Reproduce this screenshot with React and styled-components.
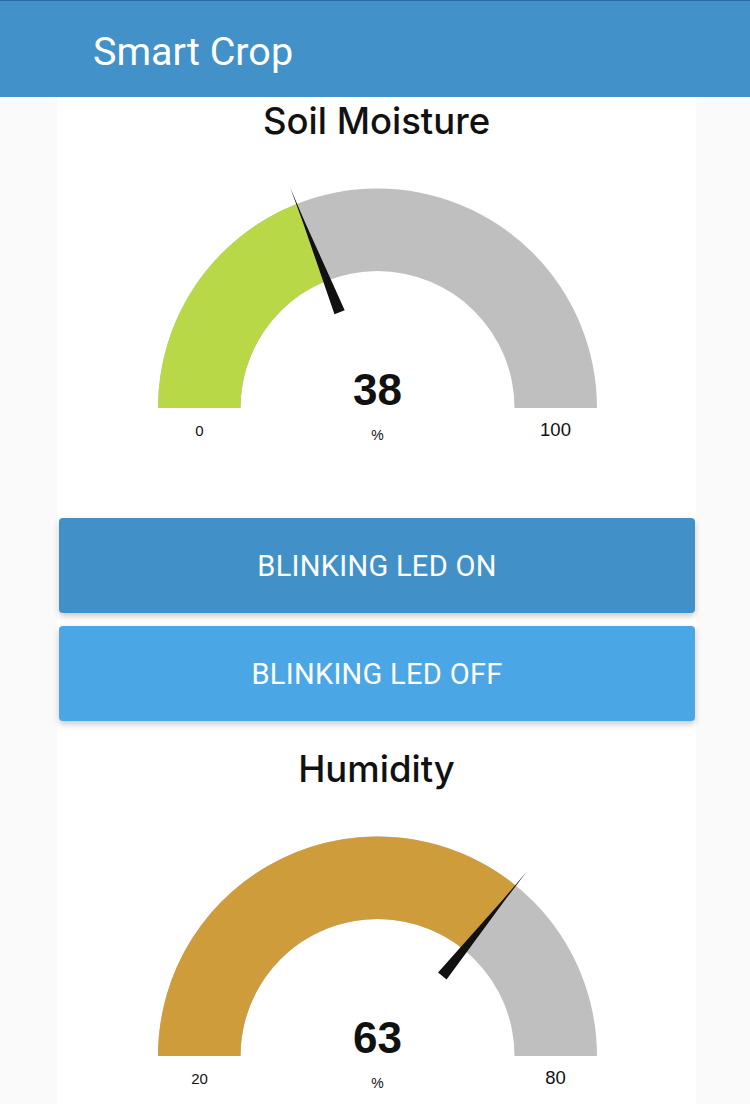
import React from "react";
import styled, { createGlobalStyle } from "styled-components";

const GlobalStyle = createGlobalStyle`
  html, body {
    margin: 0;
    padding: 0;
    background: #fafafa;
  }
  body {
    font-family: "Inter", "Roboto", sans-serif;
    overflow: hidden;
  }
`;

const CX = 320.5;
const BASE = 263;
const OUTER = 219.5;
const INNER = 137;

function pt(r, deg) {
  const a = (deg * Math.PI) / 180;
  return [CX - r * Math.cos(a), BASE - r * Math.sin(a)];
}

function band(from, to) {
  const [x1, y1] = pt(OUTER, from);
  const [x2, y2] = pt(OUTER, to);
  const [x3, y3] = pt(INNER, to);
  const [x4, y4] = pt(INNER, from);
  return `M${x1} ${y1} A${OUTER} ${OUTER} 0 0 1 ${x2} ${y2} L${x3} ${y3} A${INNER} ${INNER} 0 0 0 ${x4} ${y4} Z`;
}

function needle(deg) {
  const a = (deg * Math.PI) / 180;
  const [tx, ty] = pt(237, deg);
  const [bx, by] = pt(103, deg);
  // perpendicular offset
  const px = Math.sin(a) * 5.5;
  const py = -Math.cos(a) * 5.5;
  const [sx, sy] = pt(200, deg);
  return `${tx},${ty} ${sx + px * 0.18},${sy + py * 0.18} ${bx + px},${by + py} ${bx - px},${by - py} ${sx - px * 0.18},${sy - py * 0.18}`;
}

function Gauge({ title, value, min, max, color }) {
  const deg = ((value - min) / (max - min)) * 180;
  return (
    <Section>
      <Title>{title}</Title>
      <GaugeSvg viewBox="0 0 639 373" width="639" height="373">
        <path d={band(0, 180)} fill="#bfbfbf" />
        <path d={band(0, deg)} fill={color} />
        <polygon points={needle(deg)} fill="#111" />
        <text x={CX} y={BASE - 3} textAnchor="middle" fontSize="44" fontWeight="700" fill="#111" fontFamily="Liberation Sans, Arial, sans-serif">
          {value}
        </text>
        <text x={CX} y={BASE + 32} textAnchor="middle" fontSize="14" fill="#111" fontFamily="Liberation Sans, Arial, sans-serif">
          %
        </text>
        <text x={CX - 178} y={BASE + 27.5} textAnchor="middle" fontSize="15" fill="#111" fontFamily="Liberation Sans, Arial, sans-serif">
          {min}
        </text>
        <text x={CX + 178} y={BASE + 27.5} textAnchor="middle" fontSize="18.5" fill="#111" fontFamily="Liberation Sans, Arial, sans-serif">
          {max}
        </text>
      </GaugeSvg>
    </Section>
  );
}

export default function App() {
  return (
    <>
      <GlobalStyle />
      <Header>
        <Brand>Smart Crop</Brand>
      </Header>
      <Card>
        <Gauge title="Soil Moisture" value={38} min={0} max={100} color="#b9d847" />
        <Buttons>
          <LedButton $bg="#4290c8">BLINKING LED ON</LedButton>
          <LedButton $bg="#4ba6e6">BLINKING LED OFF</LedButton>
        </Buttons>
        <Gauge title="Humidity" value={63} min={20} max={80} color="#cf9c3b" />
      </Card>
    </>
  );
}

const Header = styled.header`
  height: 97px;
  background: #4291c8;
  border-top: 1px solid #2c6c9e;
  display: flex;
  align-items: center;
  padding-left: 93px;
  box-sizing: border-box;
`;

const Brand = styled.h1`
  margin: 0;
  color: #fff;
  font-family: "Roboto", sans-serif;
  font-weight: 400;
  font-size: 39.5px;
  margin-top: 4px;
`;

const Card = styled.main`
  width: 639px;
  margin-left: 57px;
  background: #fff;
  min-height: 1007px;
`;

const Section = styled.section`
  display: flex;
  flex-direction: column;
  align-items: center;
`;

const Title = styled.h2`
  margin: 0;
  height: 48px;
  line-height: 48px;
  font-family: "Inter", sans-serif;
  font-weight: 500;
  font-size: 36.5px;
  color: #111;
`;

const GaugeSvg = styled.svg`
  display: block;
`;

const Buttons = styled.div`
  display: flex;
  flex-direction: column;
  gap: 13px;
  padding: 0 1px 0 2px;
  margin-bottom: 24px;
`;

const LedButton = styled.button`
  height: 95px;
  border: none;
  border-radius: 4px;
  background: ${(p) => p.$bg};
  color: #fff;
  font-family: "Roboto", sans-serif;
  font-size: 29px;
  font-weight: 400;
  letter-spacing: 0.3px;
  padding-top: 2px;
  box-shadow: 0 3px 6px rgba(0, 0, 0, 0.22);
  cursor: pointer;
`;
